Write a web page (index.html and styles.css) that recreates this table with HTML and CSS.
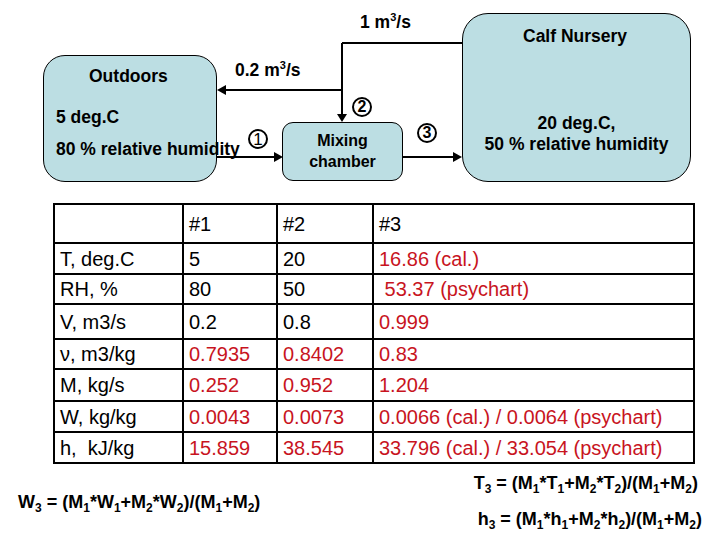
FILE: index.html
```html
<!DOCTYPE html>
<html>
<head>
<meta charset="utf-8">
<link rel="stylesheet" href="styles.css">
</head>
<body>
<div class="page">
  <div class="diagram">
    <svg class="wires" width="720" height="203" viewBox="0 0 720 203">
      <g stroke="#000" stroke-width="2" fill="none">
        <path d="M342 43 H462"/>
        <path d="M342 43 V116"/>
        <path d="M342 90 H224"/>
        <path d="M217 157 H276"/>
        <path d="M403 157 H455"/>
      </g>
      <g fill="#000">
        <path d="M337 114 L347 114 L342 122 Z"/>
        <path d="M217 90 L226 85 L226 95 Z"/>
        <path d="M283 157 L274 152 L274 162 Z"/>
        <path d="M462 157 L453 152 L453 162 Z"/>
      </g>
    </svg>
    <div class="node outdoors"></div>
    <div class="node mixer"><span>Mixing</span><span>chamber</span></div>
    <div class="node nursery"></div>

    <div class="label l-outdoors">Outdoors</div>
    <div class="label l-temp1">5 deg.C</div>
    <div class="label l-rh1">80 % relative humidity</div>
    <div class="label l-flow1">1 m<sup>3</sup>/s</div>
    <div class="label l-flow2">0.2 m<sup>3</sup>/s</div>
    <div class="label l-nursery">Calf Nursery</div>
    <div class="label l-cond">20 deg.C,<br>50 % relative humidity</div>

    <span class="pt pt1">1</span>
    <span class="pt pt2">2</span>
    <span class="pt pt3">3</span>
  </div>

  <table class="data">
    <tr class="r-h"><td></td><td class="hd">#1</td><td class="hd">#2</td><td class="hd">#3</td></tr>
    <tr class="r1"><td>T, deg.C</td><td>5</td><td>20</td><td class="v">16.86 (cal.)</td></tr>
    <tr class="r2"><td>RH, %</td><td>80</td><td>50</td><td class="v">&nbsp;53.37 (psychart)</td></tr>
    <tr class="r3"><td>V, m3/s</td><td>0.2</td><td>0.8</td><td class="v">0.999</td></tr>
    <tr class="r4"><td>ν, m3/kg</td><td class="v">0.7935</td><td class="v">0.8402</td><td class="v">0.83</td></tr>
    <tr class="r5"><td>M, kg/s</td><td class="v">0.252</td><td class="v">0.952</td><td class="v">1.204</td></tr>
    <tr class="r6"><td>W, kg/kg</td><td class="v">0.0043</td><td class="v">0.0073</td><td class="v">0.0066 (cal.) / 0.0064 (psychart)</td></tr>
    <tr class="r7"><td>h,&nbsp; kJ/kg</td><td class="v">15.859</td><td class="v">38.545</td><td class="v">33.796 (cal.) / 33.054 (psychart)</td></tr>
  </table>

  <div class="formulas">
    <div class="f fw">W<sub>3</sub> = (M<sub>1</sub>*W<sub>1</sub>+M<sub>2</sub>*W<sub>2</sub>)/(M<sub>1</sub>+M<sub>2</sub>)</div>
    <div class="fr">
      <div class="f ft">T<sub>3</sub> = (M<sub>1</sub>*T<sub>1</sub>+M<sub>2</sub>*T<sub>2</sub>)/(M<sub>1</sub>+M<sub>2</sub>)</div>
      <div class="f fh">h<sub>3</sub> = (M<sub>1</sub>*h<sub>1</sub>+M<sub>2</sub>*h<sub>2</sub>)/(M<sub>1</sub>+M<sub>2</sub>)</div>
    </div>
  </div>
</div>
</body>
</html>
```
FILE: styles.css
```css
html, body {
  margin: 0;
  padding: 0;
  background: #fff;
}
.page {
  width: 720px;
  height: 540px;
  overflow: hidden;
  font-family: "Liberation Sans", Arial, sans-serif;
  color: #000;
  display: flex;
  flex-direction: column;
}
.diagram {
  position: relative;
  height: 203px;
  flex: none;
}
.wires {
  position: absolute;
  left: 0;
  top: 0;
}
.node {
  position: absolute;
  box-sizing: border-box;
  background: #bcdee3;
  border: 1.5px solid #000;
}
.outdoors {
  left: 43px; top: 55px; width: 174px; height: 127px;
  border-radius: 22px;
}
.mixer {
  left: 282px; top: 122px; width: 121px; height: 59px;
  border-radius: 11px;
  display: flex;
  flex-direction: column;
  align-items: center;
  justify-content: center;
  font-weight: bold;
  font-size: 16px;
  line-height: 21px;
  padding-bottom: 2px;
}
.nursery {
  left: 462px; top: 13px; width: 229px; height: 169px;
  border-radius: 26px;
}
.label {
  position: absolute;
  font-weight: bold;
  font-size: 17.5px;
  line-height: 20px;
  white-space: nowrap;
}
.label sup {
  font-size: 11px;
  line-height: 0;
  vertical-align: 7px;
}
.l-outdoors { left: 89px; top: 66px; }
.l-temp1 { left: 56px; top: 107px; }
.l-rh1 { left: 56px; top: 139px; }
.l-flow1 { left: 360px; top: 12px; }
.l-flow2 { left: 235px; top: 60px; }
.l-nursery { left: 523px; top: 26px; }
.l-cond { left: 462px; width: 229px; top: 113px; text-align: center; line-height: 21px; }

.pt {
  position: absolute;
  box-sizing: border-box;
  width: 20px;
  height: 20px;
  border-radius: 50%;
  border: 2px solid #000;
  display: flex;
  align-items: center;
  justify-content: center;
  font-size: 17px;
  font-weight: normal;
  color: #000;
  line-height: 1;
}
.pt1 { left: 248px; top: 129px; }
.pt2 { left: 352px; top: 97px; border-width: 2.6px; font-weight: bold; font-size: 16px; }
.pt3 { left: 417px; top: 123px; border-width: 2.8px; font-weight: bold; font-size: 16px; }

.data {
  margin-left: 53px;
  width: 642px;
  border-collapse: collapse;
  border: 2.5px solid #000;
  font-size: 20px;
  flex: none;
}
.data td {
  border: 2px solid #000;
  padding: 0 0 0 5px;
  vertical-align: middle;
  white-space: nowrap;
  line-height: 22px;
}
.data td:nth-child(1) { width: 122px; }
.data td:nth-child(2) { width: 87px; }
.data td:nth-child(3) { width: 89px; }
.data td.v { color: #c8141e; }
.data td.hd { vertical-align: top; padding-top: 8px; }
.r-h { height: 39px; }
.r1 { height: 31px; }
.r2 { height: 30px; }
.r3 { height: 35px; }
.r4 { height: 30px; }
.r5 { height: 32px; }
.r6 { height: 31px; }
.r7 { height: 31px; }

.formulas {
  flex: 1;
  display: flex;
  justify-content: space-between;
  align-items: flex-start;
}
.f {
  font-weight: bold;
  font-size: 18px;
  line-height: 22px;
  white-space: nowrap;
}
.f sub {
  font-size: 12px;
  line-height: 0;
  vertical-align: -4px;
}
.fw {
  margin-left: 18px;
  margin-top: 27px;
}
.fr {
  display: flex;
  flex-direction: column;
  align-items: flex-end;
  margin-right: 22px;
  margin-top: 8px;
  gap: 14px;
}
.fh { margin-right: -4px; }
```
